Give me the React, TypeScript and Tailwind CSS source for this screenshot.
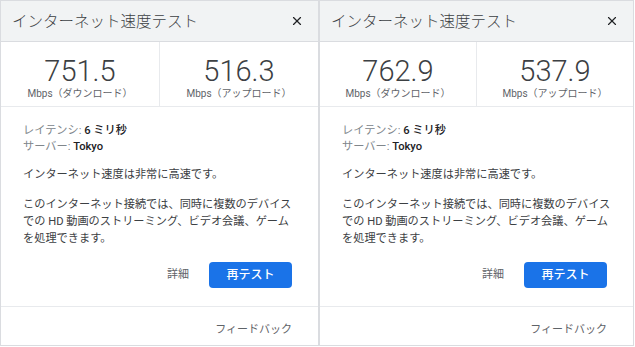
import { X } from 'lucide-react';

type Result = { down: string; up: string; latency: string; server: string };

const results: Result[] = [
  { down: '751.5', up: '516.3', latency: '6 ミリ秒', server: 'Tokyo' },
  { down: '762.9', up: '537.9', latency: '6 ミリ秒', server: 'Tokyo' },
];

function Metric({ value, label, divider }: { value: string; label: string; divider?: boolean }) {
  return (
    <div className={`flex flex-1 flex-col items-center pt-[12px] ${divider ? 'border-r border-[#e8eaed]' : ''}`}>
      <span className="text-[29px] font-light leading-[34px] text-[#3c4043]">{value}</span>
      <span className="mt-[-1px] text-[10px] leading-[14px] text-[#5f6368]">{label}</span>
    </div>
  );
}

function SpeedCard({ r, className }: { r: Result; className: string }) {
  return (
    <div className={`flex h-[346px] shrink-0 flex-col border border-[#dadce0] bg-white ${className}`}>
      <div className="flex h-[41px] items-center justify-between border-b border-[#dadce0] bg-[#f1f3f4] pl-[11px] pr-[14px] pt-[4px]">
        <span className="text-[15.5px] font-light text-[#3c4043]">インターネット速度テスト</span>
        <X className="mb-[4px] size-[14px] text-[#202124]" strokeWidth={2} />
      </div>
      <div className="flex h-[65px] border-b border-[#e8eaed]">
        <Metric value={r.down} label="Mbps（ダウンロード）" divider />
        <Metric value={r.up} label="Mbps（アップロード）" />
      </div>
      <div className="flex flex-1 flex-col px-[22px] pt-[16px] text-[11.2px] text-[#3c4043]">
        <p className="leading-[16px]">
          <span className="text-[#80868b]">レイテンシ: </span>
          <span className="font-medium text-[#202124]">{r.latency}</span>
        </p>
        <p className="leading-[16px]">
          <span className="text-[#80868b]">サーバー: </span>
          <span className="font-medium text-[#202124]">{r.server}</span>
        </p>
        <p className="mt-[12px] leading-[16px]">インターネット速度は非常に高速です。</p>
        <p className="mt-[13px] max-w-[271px] leading-[17px]">
          このインターネット接続では、同時に複数のデバイスでの HD 動画のストリーミング、ビデオ会議、ゲームを処理できます。
        </p>
        <div className="mt-[15px] flex items-center justify-end gap-[20px] pr-[4px]">
          <span className="text-[11px] text-[#5f6368]">詳細</span>
          <button className="h-[26px] w-[83px] rounded-[4px] bg-[#1a73e8] text-[12px] font-medium text-white">
            再テスト
          </button>
        </div>
      </div>
      <div className="h-[39px] border-t border-[#e8eaed] pr-[26px] pt-[15px] text-right text-[11px] leading-[16px] text-[#5f6368]">
        フィードバック
      </div>
    </div>
  );
}

export default function App() {
  return (
    <div
      className="flex h-[347px] w-[635px] bg-white"
      style={{ fontFamily: 'Roboto, "Noto Sans CJK JP", sans-serif' }}
    >
      <SpeedCard r={results[0]} className="w-[319px]" />
      <SpeedCard r={results[1]} className="w-[315px]" />
    </div>
  );
}
